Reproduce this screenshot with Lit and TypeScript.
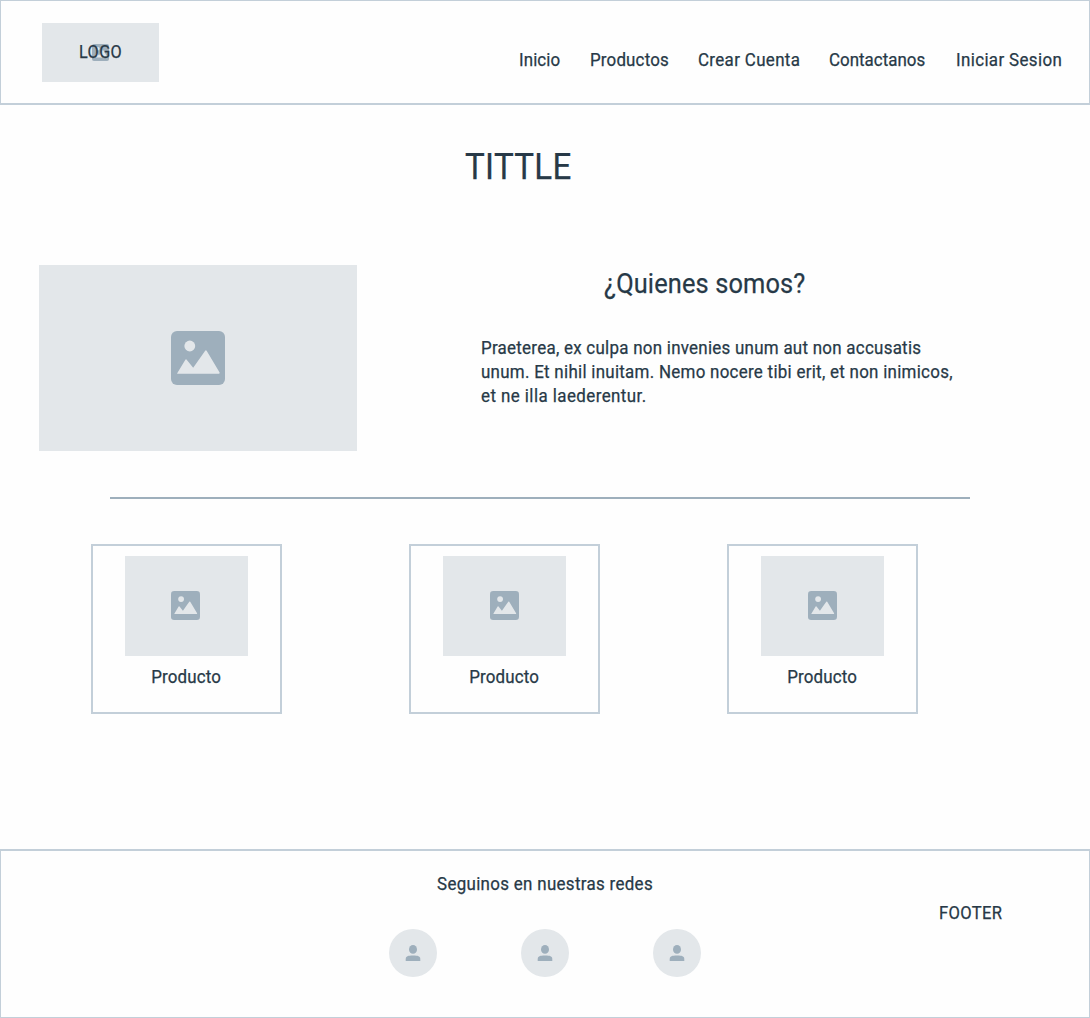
import { LitElement, html, css, svg } from "lit";
import { customElement, property } from "lit/decorators.js";

@customElement("image-placeholder")
class ImagePlaceholder extends LitElement {
  static styles = css`
    :host {
      display: flex;
      align-items: center;
      justify-content: center;
      box-sizing: border-box;
      background: #e3e7ea;
    }
    .icon {
      display: block;
      width: var(--icon-size, 29px);
      height: var(--icon-size, 29px);
    }
  `;

  render() {
    return html`<svg class="icon" viewBox="0 0 54 54">
      ${svg`<rect width="54" height="54" rx="6" fill="#9eafbc"/>
      <circle cx="18.8" cy="15" r="5.4" fill="#e3e7ea"/>
      <path d="M6.2 42.2 L14.2 28.9 Q15 27.7 15.9 28.9 L22.2 36.7 L34 19.9 Q34.9 18.8 35.8 19.9 L48.6 41.6 Q49 42.7 48 42.7 H6.8 Q5.9 42.7 6.2 42.2Z" fill="#e3e7ea"/>`}
    </svg>`;
  }
}

@customElement("social-avatar")
class SocialAvatar extends LitElement {
  static styles = css`
    :host {
      display: flex;
      width: 48px;
      height: 48px;
      border-radius: 50%;
      background: #e3e7ea;
    }
  `;

  render() {
    return html`<svg width="48" height="48" viewBox="0 0 48 48">
      ${svg`<ellipse cx="24" cy="20.4" rx="4" ry="4.4" fill="#9eafbc"/>
      <path d="M16.7 32 V30.2 C16.7 27.3 19 26.6 24 26.6 C29 26.6 31.3 27.3 31.3 30.2 V32Z" fill="#9eafbc"/>`}
    </svg>`;
  }
}

@customElement("product-card")
class ProductCard extends LitElement {
  @property() name = "";

  static styles = css`
    :host {
      display: flex;
      flex-direction: column;
      align-items: center;
      box-sizing: border-box;
      width: 191px;
      height: 170px;
      padding-top: 10px;
      border: 2px solid #c3cfd9;
    }
    .photo {
      width: 123px;
      height: 100px;
      padding: 0 var(--icon-shift, 0) 1px 0;
    }
    .name {
      margin: 9px 1px 0 0;
      letter-spacing: 0.16px;
      transform: scaleX(0.94);
    }
  `;

  render() {
    return html`
      <image-placeholder class="photo"></image-placeholder>
      <div class="name">${this.name}</div>
    `;
  }
}

@customElement("app-root")
class AppRoot extends LitElement {
  static styles = css`
    :host {
      display: flex;
      flex-direction: column;
      box-sizing: border-box;
      width: 1090px;
      height: 1018px;
      background: #fefefe;
      color: #273947;
      font: 400 18px/24px Roboto, "Liberation Sans", sans-serif;
      -webkit-text-stroke: 0.25px #273947;
      white-space: nowrap;
    }
    header {
      display: flex;
      justify-content: space-between;
      box-sizing: border-box;
      height: 105px;
      padding: 22px 0 0 41px;
      border: 1px solid #c3cfd9;
      border-bottom-width: 2px;
    }
    .logo {
      position: relative;
      width: 117px;
      height: 59px;
    }
    .logo-image {
      height: 59px;
      --icon-size: 17px;
    }
    .logo-text {
      position: absolute;
      left: 37px;
      top: 17px;
      letter-spacing: 0.45px;
      transform: scaleX(0.9);
      transform-origin: left;
    }
    nav {
      display: grid;
      grid-template-columns: 71px 108px 131px 127px 133px;
      height: 24px;
      margin-top: 25px;
    }
    nav span, h1, h2, .line {
      transform: scaleX(0.94);
      transform-origin: left;
    }
    .inicio { letter-spacing: 0.11px; }
    .productos { letter-spacing: 0.18px; }
    .crear { letter-spacing: 0.37px; }
    .contacto { letter-spacing: 0.02px; }
    .sesion { letter-spacing: 0.39px; }
    h1, h2, p { margin: 0; font-weight: 400; }
    h1 {
      margin: 40px 0 0 465px;
      font-size: 36px;
      line-height: 44px;
      letter-spacing: 0.35px;
      transform: scaleX(0.92);
    }
    .about {
      display: flex;
      height: 186px;
      margin: 76px 0 0 39px;
    }
    .about-image {
      width: 318px;
      height: 186px;
      --icon-size: 54px;
    }
    .about-text {
      margin: 3px 0 0 124px;
    }
    h2 {
      margin-left: 122.5px;
      font-size: 27px;
      line-height: 32px;
      letter-spacing: 0.14px;
    }
    p { margin-top: 36px; }
    .line { display: block; }
    .first { letter-spacing: 0.284px; }
    .second { letter-spacing: 0.298px; }
    .third { letter-spacing: 0.46px; }
    .divider {
      width: 860px;
      height: 2px;
      margin: 46px 0 0 110px;
      background: #9eafbc;
    }
    .products {
      display: flex;
      gap: 127px;
      margin: 45px 0 0 91px;
    }
    .products product-card:first-child { --icon-shift: 2px; }
    footer {
      display: grid;
      grid-template-columns: 388px 312px 238px auto;
      box-sizing: border-box;
      height: 169px;
      margin-top: auto;
      border: 1px solid #c3cfd9;
      border-top-width: 2px;
    }
    .social {
      grid-column: 2;
      padding-top: 21px;
    }
    .social-title {
      text-align: center;
      letter-spacing: 0.337px;
      transform: scaleX(0.94);
    }
    .avatars {
      display: flex;
      justify-content: space-between;
      margin-top: 33px;
    }
    .footer-label {
      grid-column: 4;
      padding-top: 50px;
      letter-spacing: 0.39px;
      transform: scaleX(0.92);
      transform-origin: left;
    }
  `;

  render() {
    return html`
      <header>
        <div class="logo">
          <image-placeholder class="logo-image"></image-placeholder>
          <span class="logo-text">LOGO</span>
        </div>
        <nav>
          <span class="inicio">Inicio</span>
          <span class="productos">Productos</span>
          <span class="crear">Crear Cuenta</span>
          <span class="contacto">Contactanos</span>
          <span class="sesion">Iniciar Sesion</span>
        </nav>
      </header>
      <h1>TITTLE</h1>
      <section class="about">
        <image-placeholder class="about-image"></image-placeholder>
        <div class="about-text">
          <h2>¿Quienes somos?</h2>
          <p>
            <span class="line first">Praeterea, ex culpa non invenies unum aut non accusatis</span>
            <span class="line second">unum. Et nihil inuitam. Nemo nocere tibi erit, et non inimicos,</span>
            <span class="line third">et ne illa laederentur.</span>
          </p>
        </div>
      </section>
      <div class="divider"></div>
      <section class="products">
        ${[1, 2, 3].map(() => html`<product-card name="Producto"></product-card>`)}
      </section>
      <footer>
        <div class="social">
          <div class="social-title">Seguinos en nuestras redes</div>
          <div class="avatars">
            ${[1, 2, 3].map(() => html`<social-avatar></social-avatar>`)}
          </div>
        </div>
        <div class="footer-label">FOOTER</div>
      </footer>
    `;
  }
}
